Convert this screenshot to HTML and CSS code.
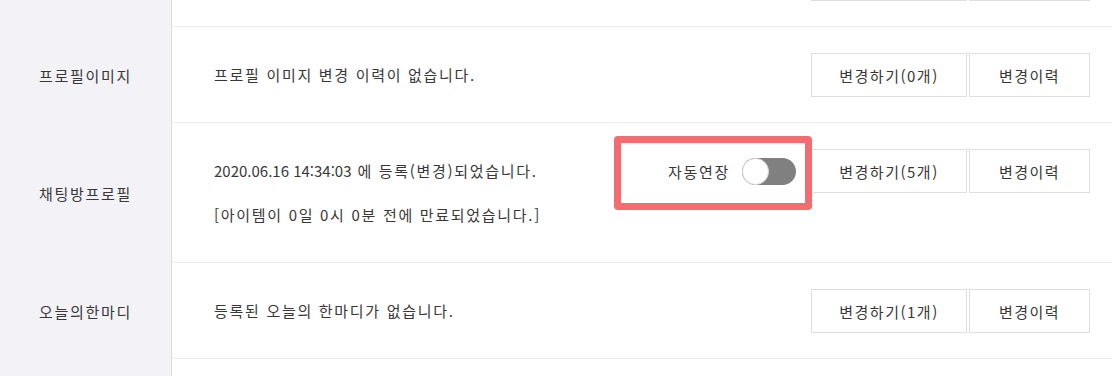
FILE: index.html
```html
<!DOCTYPE html>
<html lang="ko">
<head>
<meta charset="utf-8">
<title>프로필 설정</title>
<link rel="stylesheet" href="styles.css">
</head>
<body>
<div class="table">
  <div class="row">
    <div class="label">닉네임</div>
    <div class="content">
      <div class="lines"><div class="line">등록된 닉네임이 없습니다.</div></div>
      <div class="actions">
        <button class="btn btn-change">변경하기(0개)</button>
        <button class="btn btn-history">변경이력</button>
      </div>
    </div>
  </div>
  <div class="row">
    <div class="label">프로필이미지</div>
    <div class="content">
      <div class="lines"><div class="line">프로필 이미지 변경 이력이 없습니다.</div></div>
      <div class="actions">
        <button class="btn btn-change">변경하기(0개)</button>
        <button class="btn btn-history">변경이력</button>
      </div>
    </div>
  </div>
  <div class="row">
    <div class="label">채팅방프로필</div>
    <div class="content">
      <div class="lines">
        <div class="line"><span class="date">2020.06.16 14:34:03</span> 에 등록(변경)되었습니다.</div>
        <div class="line">[아이템이 0일 0시 0분 전에 만료되었습니다.]</div>
      </div>
      <div class="actions">
        <div class="auto">
          <span class="auto-text">자동연장</span>
          <span class="toggle"><span class="knob"></span></span>
        </div>
        <button class="btn btn-change">변경하기(5개)</button>
        <button class="btn btn-history">변경이력</button>
      </div>
    </div>
  </div>
  <div class="row">
    <div class="label">오늘의한마디</div>
    <div class="content">
      <div class="lines"><div class="line">등록된 오늘의 한마디가 없습니다.</div></div>
      <div class="actions">
        <button class="btn btn-change">변경하기(1개)</button>
        <button class="btn btn-history">변경이력</button>
      </div>
    </div>
  </div>
  <div class="row">
    <div class="label">배경이미지</div>
    <div class="content">
      <div class="lines"><div class="line">등록된 배경이미지가 없습니다.</div></div>
      <div class="actions">
        <button class="btn btn-change">변경하기(0개)</button>
        <button class="btn btn-history">변경이력</button>
      </div>
    </div>
  </div>
</div>
</body>
</html>
```

FILE: styles.css
```css
html, body {
  margin: 0;
  padding: 0;
  background: #ffffff;
  overflow: hidden;
}

body {
  font-family: "Noto Sans CJK KR", "Noto Sans", sans-serif;
  font-size: 15px;
  color: #383838;
}

.table {
  margin-top: -69px;
}

.row {
  display: grid;
  grid-template-columns: 172px 1fr;
}

.label {
  background: #f3f3f7;
  border-right: 1px solid #dcdcdc;
  display: flex;
  align-items: center;
  justify-content: center;
  letter-spacing: 1.7px;
}

.content {
  display: flex;
  align-items: flex-start;
  justify-content: space-between;
  padding: 26px 22px 25px 42px;
  border-bottom: 1px solid #ececec;
}

.lines {
  display: flex;
  flex-direction: column;
}

.line {
  height: 44px;
  line-height: 44px;
  letter-spacing: 1.7px;
  white-space: nowrap;
}

.date {
  letter-spacing: 0;
}

.actions {
  display: flex;
  align-items: center;
  gap: 2px;
  height: 44px;
}

.btn {
  height: 44px;
  box-sizing: border-box;
  border: 1px solid #dedede;
  background: #ffffff;
  font-family: inherit;
  font-size: 15px;
  letter-spacing: 1.5px;
  color: #383838;
  padding: 0;
  cursor: pointer;
}

.btn-change {
  width: 156px;
}

.btn-history {
  width: 121px;
}

.auto {
  position: relative;
  display: flex;
  align-items: center;
  gap: 12px;
  height: 44px;
  margin-right: 13px;
}

.auto-text {
  letter-spacing: 1.7px;
}

.auto::before {
  content: "";
  position: absolute;
  top: -13px;
  bottom: -17px;
  left: -54px;
  right: -16px;
  border: 7px solid #f46b70;
  border-radius: 4px;
  z-index: 2;
  pointer-events: none;
}

.toggle {
  position: relative;
  width: 54px;
  height: 27px;
  border-radius: 14px;
  background: #808080;
}

.knob {
  position: absolute;
  left: 0;
  top: 0;
  width: 27px;
  height: 27px;
  box-sizing: border-box;
  border-radius: 50%;
  background: #ffffff;
  border: 1px solid #dcdcdc;
}
```
